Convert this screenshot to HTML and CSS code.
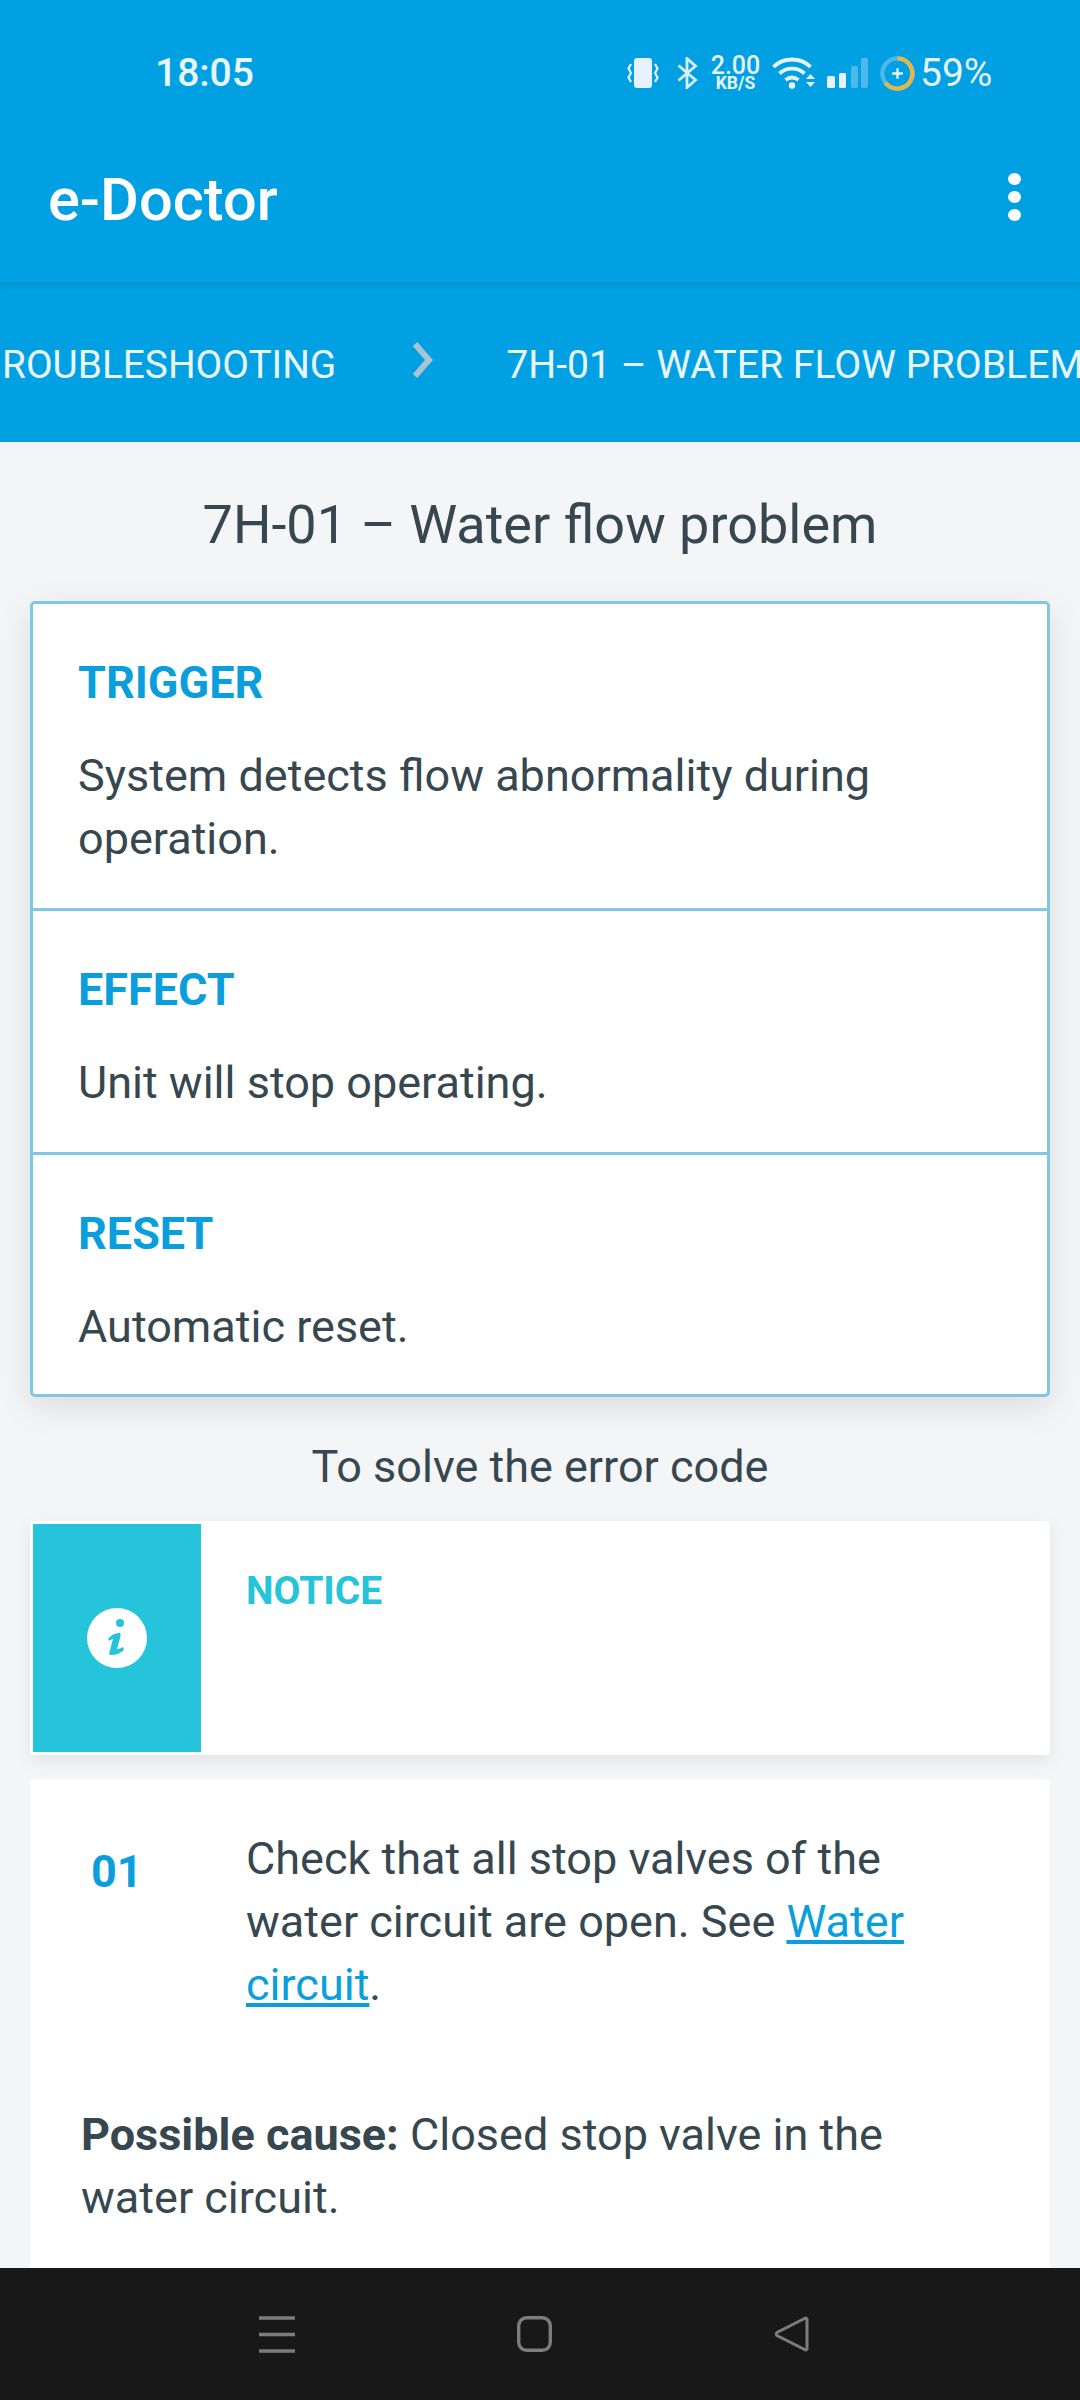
FILE: index.html
```html
<!DOCTYPE html>
<html lang="en">
<head>
<meta charset="utf-8">
<title>e-Doctor</title>
<link rel="stylesheet" href="styles.css">
</head>
<body>
<div class="phone">
  <header class="top">
    <div class="status">
      <span class="clock">18:05</span>
      <div class="status-icons">
        <svg class="i-vib" viewBox="0 0 32 30" width="32" height="30"><rect x="7" y="0" width="18" height="30" rx="3" fill="#e6f3fc"/><path d="M4 6 1.5 10.500 4 15 1.500 19.500 4 24M28 6l2.500 4.500L28 15l2.500 4.500L28 24" fill="none" stroke="#e6f3fc" stroke-width="2.200"/></svg>
        <svg class="i-bt" viewBox="0 0 21 32" width="21" height="32"><path d="M1.500 8.500 18.500 23 10 30.500V1.500L18.500 9 1.500 23.500" fill="none" stroke="#d8eefb" stroke-width="2.800"/></svg>
        <span class="speed"><b>2.00</b><i>KB/S</i></span>
        <svg class="i-wifi" viewBox="0 0 43 32" width="43" height="32"><path d="M1.500 10C11 0 29 0 38.500 10M7.500 16.500c7-6.500 18-6.500 25 0M13.500 23c4-3 9-3 13 0" fill="none" stroke="#e6f3fc" stroke-width="3.800"/><circle cx="20" cy="28.500" r="3.200" fill="#e6f3fc"/><path d="M34 22l4.500-5 4.500 5zM34 25l4.500 5 4.500-5z" fill="#e6f3fc"/></svg>
        <svg class="i-sig" viewBox="0 0 41 30" width="41" height="30"><rect x="0" y="18" width="8" height="12" rx="1.500" fill="#e6f3fc"/><rect x="12" y="15" width="7" height="15" rx="1.500" fill="#e6f3fc"/><rect x="24" y="8" width="7" height="22" rx="1.500" fill="#4db8ec"/><rect x="34" y="0" width="7" height="30" rx="1.500" fill="#4db8ec"/></svg>
        <svg class="i-bat" viewBox="0 0 36 36" width="35" height="35"><circle cx="18" cy="18" r="15.500" fill="none" stroke="#4db8ec" stroke-width="4.500"/><path d="M18 2.500a15.500 15.500 0 1 1-12.500 25" fill="none" stroke="#e4b64a" stroke-width="4.500"/><path d="M18 12.500v11M12.500 18h11" stroke="#e6f3fc" stroke-width="2.400"/></svg>
        <span class="pct">59%</span>
      </div>
    </div>
    <div class="appbar">
      <h1 class="brand">e-Doctor</h1>
      <div class="kebab"><span></span><span></span><span></span></div>
    </div>
  </header>

  <nav class="crumbs">
    <span class="crumb first">ROUBLESHOOTING</span>
    <svg class="chev" viewBox="0 0 22 36" width="22" height="36"><path d="M3 2l14 16L3 34" fill="none" stroke="#a9c3d3" stroke-width="6"/></svg>
    <span class="crumb current">7H-01 – WATER FLOW PROBLEM</span>
  </nav>

  <main class="content">
    <h2 class="title">7H-01 – Water flow problem</h2>

    <section class="summary">
      <div class="block">
        <h3 class="label">TRIGGER</h3>
        <p class="text">System detects flow abnormality during operation.</p>
      </div>
      <div class="block">
        <h3 class="label">EFFECT</h3>
        <p class="text">Unit will stop operating.</p>
      </div>
      <div class="block">
        <h3 class="label">RESET</h3>
        <p class="text">Automatic reset.</p>
      </div>
    </section>

    <p class="solve">To solve the error code</p>

    <section class="notice">
      <div class="notice-side">
        <svg viewBox="0 0 60 60" width="60" height="60"><circle cx="30" cy="30" r="30" fill="#fff"/><circle cx="33" cy="15" r="4" fill="#26c4da"/><path d="M21 31c3-4 7-6 11-6 2 0 2 2 1 5l-3 11c2 0 4-1 6-2l1 3c-3 3-8 5-13 5-2 0-2-2-1-5l3-11c-1 0-3 1-4 2z" fill="#26c4da"/></svg>
      </div>
      <div class="notice-body">NOTICE</div>
    </section>

    <section class="step">
      <div class="step-row">
        <span class="num">01</span>
        <p class="step-text">Check that all stop valves of the water circuit are open. See <a class="link" href="#">Water circuit</a>.</p>
      </div>
      <p class="cause"><b>Possible cause:</b> Closed stop valve in the water circuit.</p>
    </section>
  </main>

  <footer class="navbar">
    <svg viewBox="0 0 36 37" width="36" height="37"><path d="M0 2h36M0 18.500h36M0 35h36" stroke="#7c7c7c" stroke-width="3.600"/></svg>
    <svg viewBox="0 0 35 36" width="35" height="36"><rect x="1.700" y="1.700" width="31.600" height="32.600" rx="8" fill="none" stroke="#7c7c7c" stroke-width="3.400"/></svg>
    <svg viewBox="0 0 35 36" width="35" height="36"><path d="M30.500 2.500 3 16.500a2 2 0 0 0 0 3L30.500 33.500a1.500 1.500 0 0 0 2.500-1.500V4a1.500 1.500 0 0 0-2.500-1.500z" fill="none" stroke="#7c7c7c" stroke-width="3"/></svg>
  </footer>
</div>
</body>
</html>
```
FILE: styles.css
```css
* { box-sizing: border-box; }
html, body { margin: 0; padding: 0; }
body { font-family: Roboto, "Liberation Sans", sans-serif; background: #f3f5f7; color: #37474f; }
.phone { width: 1080px; height: 2400px; overflow: hidden; display: flex; flex-direction: column; }

.top { background: #00a0e3; height: 282px; color: #fff; box-shadow: 0 3px 5px rgba(0,0,0,.1); position: relative; z-index: 1; flex: none; }
.status { height: 146px; display: flex; align-items: flex-start; justify-content: space-between; padding: 52px 91px 0 155px; }
.clock { font-size: 39px; font-weight: 500; line-height: 42px; color: #eaf6fd; }
.status-icons { display: flex; align-items: center; height: 42px; color: #e6f3fc; }
.i-vib { margin-right: 18px; }
.i-bt { margin-right: 13px; }
.speed { display: flex; flex-direction: column; align-items: center; width: 49px; margin-right: 12px; line-height: 1; }
.speed b { font-size: 25px; font-weight: 500; height: 21px; line-height: 21px; }
.speed i { font-size: 17.500px; font-style: normal; font-weight: 700; line-height: 15px; }
.i-wifi { margin-right: 12px; }
.i-sig { margin-right: 12px; }
.i-bat { margin-right: 5px; }
.pct { font-size: 39px; line-height: 42px; width: 69px; white-space: nowrap; }

.appbar { display: flex; align-items: center; justify-content: space-between; height: 108px; margin-top: -3px; padding: 0 59px 0 48px; }
.brand { margin: 0; padding-top: 5px; font-size: 59.500px; font-weight: 500; line-height: 64px; color: #fff; }
.kebab { display: flex; flex-direction: column; gap: 6px; }
.kebab span { width: 13px; height: 12px; border-radius: 50%; background: #fff; }

.crumbs { background: #00a0e3; height: 160px; flex: none; display: flex; align-items: center; white-space: nowrap; overflow: hidden; font-size: 38.800px; color: #eaf6fd; padding-top: 5px; }
.crumb { flex: none; }
.first { margin-left: 2px; }
.current { font-size: 39.200px; }
.chev { flex: none; margin: -9px 72px 0 76px; }

.content { flex: 1; min-height: 0; padding: 0 30px; overflow: hidden; }
.title { margin: 0; height: 159px; display: flex; align-items: center; justify-content: center; font-size: 54px; font-weight: 400; color: #37474f; padding-top: 5px; }

.summary { background: #fff; border: 3px solid #7ec8e3; border-radius: 5px; box-shadow: 0 10px 34px rgba(0,0,0,.1); }
.block { padding: 54px 45px 0; height: 307px; border-bottom: 3px solid #7ec8e3; }
.block:nth-child(2) { height: 244px; }
.block:last-child { height: 239px; border-bottom: 0; }
.label { margin: 0 0 36px; font-size: 45px; font-weight: 700; line-height: 50px; color: #0a9fdc; }
.text { margin: 0; font-size: 45px; line-height: 63px; }

.solve { margin: 0; height: 124px; display: flex; align-items: center; justify-content: center; font-size: 45px; padding-top: 14px; }

.notice { display: flex; height: 234px; background: #fff; border-radius: 4px; padding: 3px 0 3px 3px; box-shadow: 0 6px 18px rgba(0,0,0,.07); }
.notice-side { width: 168px; background: #26c4da; display: flex; align-items: center; justify-content: center; flex: none; }
.notice-body { font-size: 39px; font-weight: 700; color: #26c4da; line-height: 48px; padding: 43px 0 0 45px; }

.step { background: #fff; border-radius: 4px; margin-top: 24px; padding: 48px 33px 0 0; height: 560px; }
.step-row { display: flex; }
.num { width: 216px; flex: none; padding: 18px 0 0 61px; font-size: 45px; font-weight: 700; color: #0a9fdc; line-height: 54px; }
.step-text { margin: 0; font-size: 45px; line-height: 63px; padding-right: 90px; }
.link { color: #0a9fdc; text-decoration: underline; }
.cause { margin: 87px 0 0; padding: 0 90px 0 51px; font-size: 45px; line-height: 63px; }
.cause b { font-weight: 700; }

.navbar { flex: none; height: 132px; background: #181818; display: flex; align-items: center; justify-content: space-between; padding: 0 271px 0 259px; position: relative; z-index: 2; }
```
